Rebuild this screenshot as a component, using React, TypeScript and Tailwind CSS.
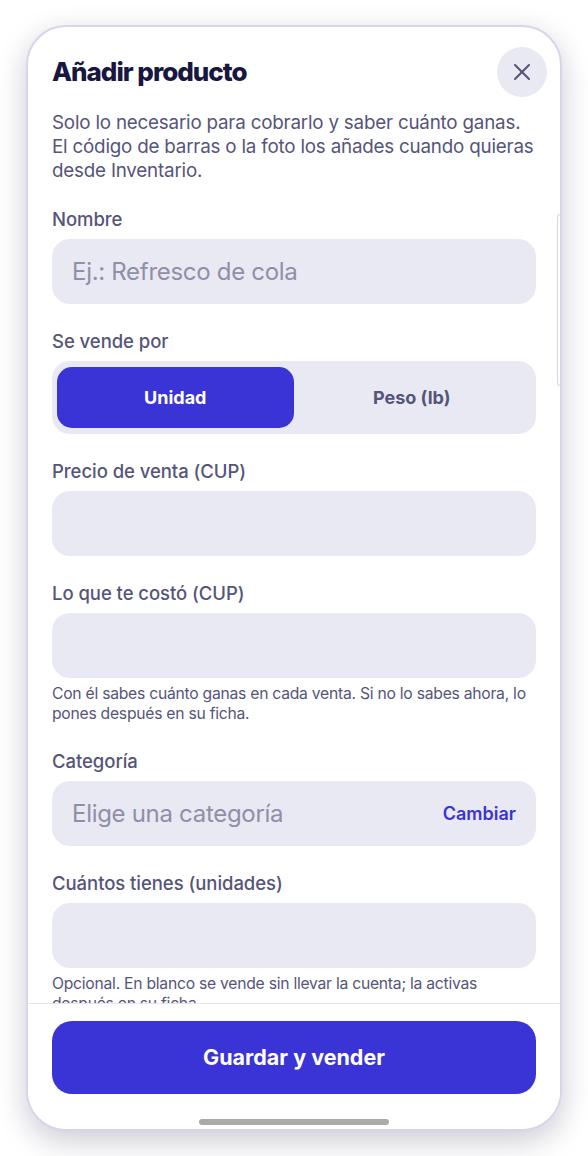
import { X } from 'lucide-react';

const BODY_FONT = "font-['Inter','Liberation_Sans',sans-serif]";

function Label({ children }: { children: string }) {
  return <label className="block h-[24px] text-[18.5px] leading-[24px] font-medium tracking-[-0.05px] text-[#55557a]">{children}</label>;
}

function Field({ placeholder, action }: { placeholder?: string; action?: string }) {
  return (
    <div className="mt-[8px] flex h-[65px] items-center justify-between rounded-[18px] bg-[#e9e9f4] px-[20px]">
      <span className="text-[24px] tracking-[-0.3px] text-[#8f8fa8]">{placeholder}</span>
      {action && <span className="text-[18px] font-semibold text-[#3a33d6]">{action}</span>}
    </div>
  );
}

function Help({ children }: { children: string }) {
  return <p className="mt-[6px] text-[15.7px] leading-[20px] tracking-[-0.25px] text-[#55557a]">{children}</p>;
}

export default function App() {
  return (
    <div className={`h-[1156px] w-[588px] overflow-hidden bg-white pt-[25px] pl-[26px] ${BODY_FONT}`}>
      <div className="relative flex h-[1106px] w-[536px] flex-col overflow-hidden rounded-[40px] border-2 border-[#d6d6e8] bg-white shadow-[0_10px_30px_rgba(20,20,60,0.22)]">
        <div className="min-h-0 flex-1 overflow-hidden px-[24px] pt-[20px]">
          <div className="flex items-center justify-between">
            <h1 className="mb-[2px] text-[26px] font-extrabold tracking-[-1px] text-[#17173f]">Añadir producto</h1>
            <button className="-mr-[11px] flex h-[50px] w-[50px] items-center justify-center rounded-full bg-[#e9e9f4] text-[#55557a]">
              <X size={28} strokeWidth={1.8} />
            </button>
          </div>
          <p className="mt-[14px] text-[18.8px] leading-[24px] tracking-[-0.2px] text-[#55557a]">
            Solo lo necesario para cobrarlo y saber cuánto ganas. El código de barras o la foto los añades cuando quieras desde Inventario.
          </p>

          <div className="mt-[24px]">
            <Label>Nombre</Label>
            <Field placeholder="Ej.: Refresco de cola" />
          </div>

          <div className="mt-[25px]">
            <Label>Se vende por</Label>
            <div className="mt-[8px] grid h-[73px] grid-cols-2 rounded-[18px] bg-[#e9e9f4] p-[6px] pl-[5px]">
              <div className="flex items-center justify-center rounded-[15px] bg-[#3a33d6] text-[18px] font-bold text-white">Unidad</div>
              <div className="flex items-center justify-center text-[18px] font-bold text-[#55557a]">Peso (lb)</div>
            </div>
          </div>

          <div className="mt-[25px]">
            <Label>Precio de venta (CUP)</Label>
            <Field />
          </div>

          <div className="mt-[25px]">
            <Label>Lo que te costó (CUP)</Label>
            <Field />
            <Help>Con él sabes cuánto ganas en cada venta. Si no lo sabes ahora, lo pones después en su ficha.</Help>
          </div>

          <div className="mt-[25px]">
            <Label>Categoría</Label>
            <Field placeholder="Elige una categoría" action="Cambiar" />
          </div>

          <div className="mt-[25px]">
            <Label>Cuántos tienes (unidades)</Label>
            <Field />
            <Help>Opcional. En blanco se vende sin llevar la cuenta; la activas después en su ficha.</Help>
          </div>
        </div>

        <div className="h-[126px] shrink-0 border-t border-[#e4e4f0] bg-white px-[24px] pt-[17px]">
          <button className="h-[73px] w-full rounded-[20px] bg-[#3a33d6] text-[21.5px] font-bold text-white">Guardar y vender</button>
          <div className="mx-auto mt-[25px] h-[6px] w-[190px] rounded-full bg-[#aaaaaa]" />
        </div>

        <div className="absolute top-[187px] right-0 h-[172px] w-[3px] rounded-l-[4px] border-y border-l border-[#d6d6e8]" />
      </div>
    </div>
  );
}
